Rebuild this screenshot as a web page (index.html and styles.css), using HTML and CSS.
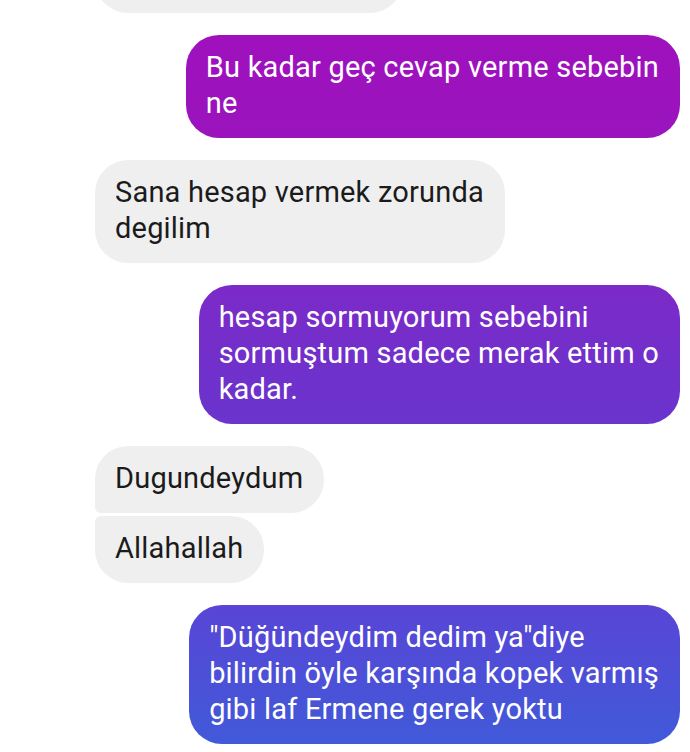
FILE: index.html
```html
<!DOCTYPE html>
<html lang="tr">
<head>
<meta charset="utf-8">
<title>Sohbet</title>
<link rel="stylesheet" href="styles.css">
</head>
<body>
<main class="chat">
  <div class="row in"><div class="bubble gray last cut"></div></div>
  <div class="row out"><div class="bubble purple">Bu kadar geç cevap verme sebebin<br>ne</div></div>
  <div class="row in"><div class="bubble gray">Sana hesap vermek zorunda<br>degilim</div></div>
  <div class="row out"><div class="bubble purple">hesap sormuyorum sebebini<br>sormuştum sadece merak ettim o<br>kadar.</div></div>
  <div class="group">
    <div class="row in"><div class="bubble gray first">Dugundeydum</div></div>
    <div class="row in"><div class="bubble gray last">Allahallah</div></div>
  </div>
  <div class="row out"><div class="bubble purple">"Düğündeydim dedim ya"diye<br>bilirdin öyle karşında kopek varmış<br>gibi laf Ermene gerek yoktu</div></div>
</main>
</body>
</html>
```
FILE: styles.css
```css
html, body {
  margin: 0;
  padding: 0;
  background: #ffffff;
}
body {
  font-family: Roboto, "Noto Sans", sans-serif;
  overflow: hidden;
}
.chat {
  display: flex;
  flex-direction: column;
  gap: 22px;
  padding: 0 10px 0 95px;
}
.group {
  display: flex;
  flex-direction: column;
  gap: 3px;
}
.row {
  display: flex;
}
.row.out {
  justify-content: flex-end;
}
.row.in {
  justify-content: flex-start;
}
.bubble {
  font-size: 29px;
  letter-spacing: 0.2px;
  line-height: 36px;
  padding: 14px 21px 17px 20px;
  border-radius: 33px;
  white-space: nowrap;
}
.gray {
  background: #efefef;
  color: #1b1b1b;
}
.purple {
  color: #ffffff;
  background-image: linear-gradient(to bottom, #a010bd 0px, #9a14bd 140px, #7c2ac8 284px, #6a34cd 420px, #5945d6 604px, #3f5bd9 752px);
  background-attachment: fixed;
}
.gray.first {
  border-bottom-left-radius: 6px;
}
.gray.last {
  border-top-left-radius: 6px;
}
.gray.cut {
  width: 267px;
  height: 36px;
  margin-top: -54px;
}
```
